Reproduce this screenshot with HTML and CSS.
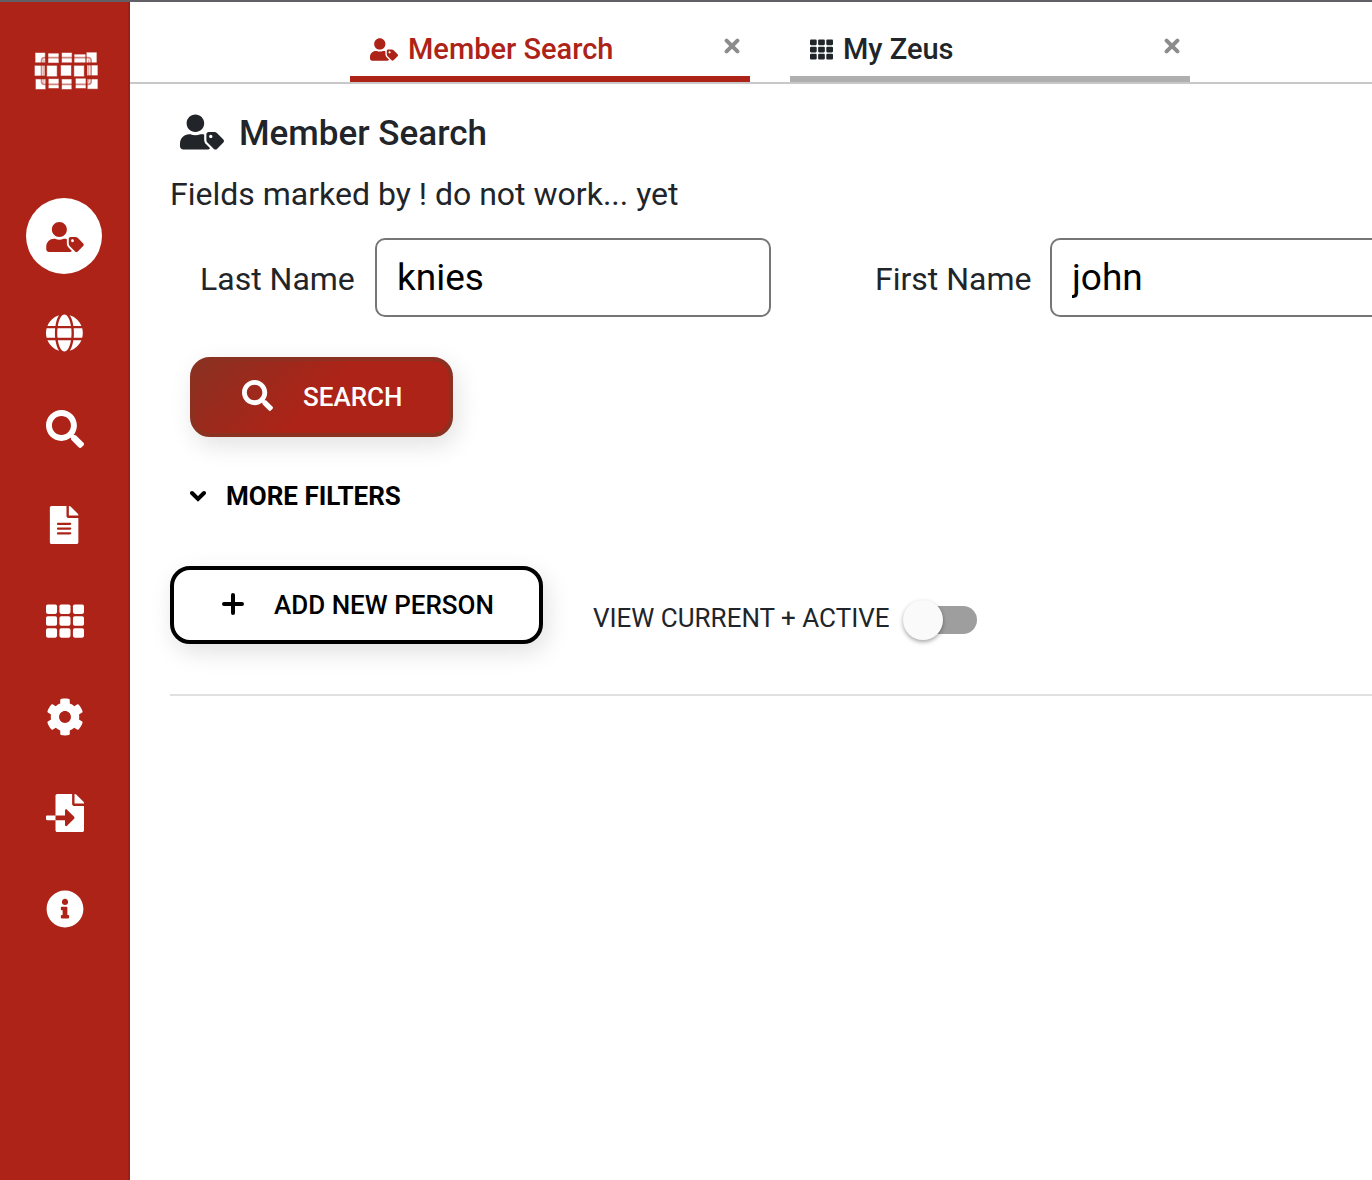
FILE: index.html
```html
<!DOCTYPE html>
<html lang="en">
<head>
<meta charset="utf-8">
<meta name="viewport" content="width=device-width, initial-scale=1">
<title>Member Search</title>
<link rel="stylesheet" href="styles.css">
</head>
<body>
<svg class="sprite" aria-hidden="true">
  <symbol id="user-tag" viewBox="0 0 640 512"><path d="M630.6 364.9l-90.3-90.2c-12-12-28.3-18.7-45.3-18.7h-79.3c-17.7 0-32 14.3-32 32v79.2c0 17 6.7 33.2 18.7 45.2l90.3 90.2c12.5 12.5 32.8 12.5 45.3 0l92.5-92.5c12.6-12.5 12.6-32.7.1-45.2zm-182.8-21c-13.3 0-24-10.7-24-24s10.7-24 24-24 24 10.7 24 24c0 13.2-10.7 24-24 24zm-223.8-88c70.7 0 128-57.3 128-128C352 57.3 294.7 0 224 0S96 57.3 96 128c0 70.6 57.3 127.9 128 127.9zm127.8 111.2V294c-12.2-3.6-24.9-6.2-38.2-6.2h-16.7c-22.2 10.2-46.9 16-72.9 16s-50.6-5.8-72.9-16h-16.7C60.2 287.9 0 348.1 0 422.3v41.6c0 26.5 21.5 48 48 48h352c15.5 0 29.1-7.5 37.9-18.9l-58-58c-18.1-18.1-28.1-42.2-28.1-67.9z"/></symbol>
  <symbol id="search" viewBox="0 0 512 512"><path d="M505 442.7L405.3 343c-4.5-4.5-10.6-7-17-7H372c27.6-35.3 44-79.7 44-128C416 93.1 322.9 0 208 0S0 93.1 0 208s93.1 208 208 208c48.3 0 92.7-16.4 128-44v16.3c0 6.4 2.5 12.5 7 17l99.7 99.7c9.4 9.4 24.6 9.4 33.9 0l28.3-28.3c9.4-9.4 9.4-24.6.1-34zM208 336c-70.7 0-128-57.2-128-128 0-70.7 57.2-128 128-128 70.7 0 128 57.2 128 128 0 70.7-57.2 128-128 128z"/></symbol>
  <symbol id="grid" viewBox="0 0 512 512">
    <rect x="0" y="32" width="149" height="128" rx="24"/><rect x="181" y="32" width="149" height="128" rx="24"/><rect x="363" y="32" width="149" height="128" rx="24"/>
    <rect x="0" y="192" width="149" height="128" rx="24"/><rect x="181" y="192" width="149" height="128" rx="24"/><rect x="363" y="192" width="149" height="128" rx="24"/>
    <rect x="0" y="352" width="149" height="128" rx="24"/><rect x="181" y="352" width="149" height="128" rx="24"/><rect x="363" y="352" width="149" height="128" rx="24"/>
  </symbol>
  <symbol id="times" viewBox="0 0 16 16"><path d="M2.6 2.6l10.8 10.8M13.4 2.6L2.6 13.4" fill="none" stroke="currentColor" stroke-width="4" stroke-linecap="round"/></symbol>
</svg>

<div class="app">
  <aside class="sidebar">
    <a class="logo" href="#" aria-label="Home">
      <svg viewBox="102 155 195 115" width="65" height="38">
        <g fill="#fff" stroke="#fff" stroke-opacity=".45" stroke-width="3">
          <rect x="106" y="158" width="28" height="28"/><rect x="145" y="160" width="30" height="27"/><rect x="186" y="158" width="29" height="28"/><rect x="224" y="163" width="32" height="23"/><rect x="261" y="157" width="29" height="29"/>
          <rect x="104" y="197" width="29" height="29"/><rect x="141" y="197" width="29" height="31"/><rect x="183" y="196" width="30" height="30"/><rect x="223" y="197" width="29" height="31"/><rect x="263" y="196" width="30" height="29"/>
          <rect x="107" y="238" width="28" height="29"/><rect x="146" y="237" width="29" height="27"/><rect x="186" y="238" width="28" height="29"/><rect x="228" y="236" width="29" height="28"/><rect x="264" y="238" width="29" height="28"/>
        </g>
        <g fill="none" stroke="#ad2317">
          <rect x="124" y="172" width="150" height="81" rx="9" stroke-width="5" stroke-opacity=".55"/>
          <path d="M131 178V248M267 178V248" stroke-width="3" stroke-opacity=".5"/>
        </g>
      </svg>
    </a>
    <nav class="menu" aria-label="Main">
      <a class="item current" href="#" aria-label="Member Search"><span class="disc"><svg width="38" height="30"><use href="#user-tag"/></svg></span></a>
      <a class="item" href="#" aria-label="Web"><svg viewBox="0 0 512 512" width="38" height="38"><path d="M336.500 160C322 70.700 287.800 8 248 8s-74 62.700-88.500 152h177zM152 256c0 22.200 1.200 43.500 3.300 64h185.300c2.100-20.500 3.300-41.800 3.300-64s-1.200-43.500-3.300-64H155.300c-2.100 20.500-3.300 41.800-3.300 64zm324.700-96c-28.600-67.900-86.500-120.400-158-141.600 24.400 33.800 41.200 84.700 50 141.600h108zM177.200 18.400C105.800 39.600 47.800 92.100 19.300 160h108c8.700-56.900 25.500-107.800 49.900-141.600zM487.400 192H372.700c2.100 21 3.300 42.500 3.300 64s-1.200 43-3.300 64h114.600c5.500-20.500 8.600-41.800 8.600-64s-3.100-43.500-8.500-64zM120 256c0-21.500 1.200-43 3.300-64H8.600C3.200 212.500 0 233.800 0 256s3.200 43.500 8.600 64h114.600c-2-21-3.200-42.500-3.200-64zm39.500 96c14.500 89.300 48.700 152 88.500 152s74-62.700 88.500-152h-177zm159.300 141.600c71.400-21.200 129.400-73.700 158-141.600h-108c-8.800 56.900-25.600 107.800-50 141.600zM19.300 352c28.600 67.900 86.500 120.400 158 141.600-24.400-33.800-41.200-84.700-50-141.600h-108z"/></svg></a>
      <a class="item" href="#" aria-label="Search"><svg width="38" height="38"><use href="#search"/></svg></a>
      <a class="item" href="#" aria-label="Documents"><svg viewBox="-52 0 512 512" width="38" height="38"><path d="M224 136V0H24C10.700 0 0 10.700 0 24v464c0 13.300 10.700 24 24 24h336c13.300 0 24-10.700 24-24V160H248c-13.200 0-24-10.800-24-24zm64 236c0 6.600-5.400 12-12 12H108c-6.600 0-12-5.400-12-12v-8c0-6.600 5.400-12 12-12h168c6.600 0 12 5.400 12 12v8zm0-64c0 6.600-5.400 12-12 12H108c-6.600 0-12-5.400-12-12v-8c0-6.600 5.400-12 12-12h168c6.600 0 12 5.400 12 12v8zm0-72v8c0 6.600-5.400 12-12 12H108c-6.600 0-12-5.400-12-12v-8c0-6.600 5.400-12 12-12h168c6.600 0 12 5.400 12 12zm96-114.100v6.100H256V0h6.100c6.400 0 12.500 2.500 17 7l97.900 98c4.500 4.500 7 10.600 7 16.900z"/></svg></a>
      <a class="item" href="#" aria-label="My Zeus"><svg width="38" height="38"><use href="#grid"/></svg></a>
      <a class="item" href="#" aria-label="Settings"><svg viewBox="0 0 512 512" width="38" height="38"><path d="M487.400 315.700l-42.600-24.600c4.300-23.200 4.300-47 0-70.200l42.600-24.600c4.900-2.800 7.100-8.600 5.500-14-11.100-35.600-30-67.800-54.700-94.600-3.800-4.100-10-5.100-14.800-2.300L380.800 110c-17.900-15.400-38.500-27.300-60.800-35.100V25.800c0-5.600-3.900-10.500-9.400-11.700-36.700-8.200-74.300-7.800-109.200 0-5.500 1.200-9.400 6.100-9.400 11.700V75c-22.200 7.900-42.800 19.800-60.800 35.100L88.700 85.500c-4.900-2.800-11-1.900-14.800 2.300-24.700 26.700-43.600 58.900-54.700 94.600-1.700 5.400.6 11.200 5.500 14L67.300 221c-4.300 23.200-4.300 47 0 70.200l-42.600 24.600c-4.900 2.800-7.100 8.600-5.500 14 11.100 35.600 30 67.800 54.700 94.600 3.800 4.100 10 5.100 14.800 2.300l42.600-24.600c17.900 15.400 38.500 27.300 60.800 35.100v49.200c0 5.600 3.900 10.500 9.400 11.700 36.700 8.200 74.300 7.800 109.200 0 5.500-1.200 9.400-6.100 9.400-11.700v-49.200c22.200-7.900 42.800-19.800 60.800-35.100l42.600 24.600c4.900 2.800 11 1.900 14.800-2.300 24.700-26.700 43.600-58.900 54.700-94.600 1.500-5.500-.7-11.300-5.600-14.100zM256 336c-44.100 0-80-35.900-80-80s35.900-80 80-80 80 35.900 80 80-35.900 80-80 80z"/></svg></a>
      <a class="item" href="#" aria-label="Import"><svg viewBox="0 0 512 512" width="38" height="38"><path d="M16 288c-8.800 0-16 7.200-16 16v32c0 8.800 7.200 16 16 16h112v-64zm489-183L407.100 7c-4.500-4.500-10.600-7-17-7H384v128h128v-6.100c0-6.300-2.500-12.400-7-16.900zm-153 31V0H152c-13.300 0-24 10.700-24 24v264h128v-65.200c0-14.300 17.300-21.400 27.400-11.300L379 308c6.600 6.700 6.600 17.400 0 24l-95.700 96.400c-10.100 10.100-27.400 3-27.400-11.300V352H128v136c0 13.300 10.700 24 24 24h336c13.300 0 24-10.700 24-24V160H376c-13.200 0-24-10.800-24-24z"/></svg></a>
      <a class="item" href="#" aria-label="Information"><svg viewBox="0 0 512 512" width="38" height="38"><path d="M256 8C119 8 8 119 8 256c0 137 111 248 248 248s248-111 248-248C504 119 393 8 256 8zm0 110c23.200 0 42 18.800 42 42s-18.800 42-42 42-42-18.800-42-42 18.800-42 42-42zm56 254c0 6.600-5.400 12-12 12h-88c-6.600 0-12-5.400-12-12v-24c0-6.600 5.400-12 12-12h12v-64h-12c-6.600 0-12-5.400-12-12v-24c0-6.600 5.400-12 12-12h64c6.600 0 12 5.400 12 12v100h12c6.600 0 12 5.400 12 12v24z"/></svg></a>
    </nav>
  </aside>

  <div class="workspace">
    <header class="tabs">
      <div class="tab active">
        <a class="tab-link" href="#"><svg width="28" height="23"><use href="#user-tag"/></svg>Member Search</a>
        <button class="close" type="button" aria-label="Close Member Search"><svg width="16" height="16"><use href="#times"/></svg></button>
      </div>
      <div class="tab">
        <a class="tab-link" href="#"><svg width="23" height="23"><use href="#grid"/></svg>My Zeus</a>
        <button class="close" type="button" aria-label="Close My Zeus"><svg width="16" height="16"><use href="#times"/></svg></button>
      </div>
    </header>

    <main class="content">
      <h1 class="title"><svg width="44" height="36"><use href="#user-tag"/></svg>Member Search</h1>
      <p class="note">Fields marked by ! do not work... yet</p>
      <form class="form">
        <div class="fields">
          <div class="field"><label for="last-name">Last Name</label><input id="last-name" type="text" value="knies"></div>
          <div class="field"><label for="first-name">First Name</label><input id="first-name" type="text" value="john"></div>
        </div>
        <button class="button primary" type="button"><svg width="31" height="31"><use href="#search"/></svg>SEARCH</button>
        <button class="more" type="button"><svg viewBox="0 0 16 12" width="16" height="12"><path d="M2 3l6 6 6-6" fill="none" stroke="currentColor" stroke-width="4" stroke-linecap="round"/></svg>MORE FILTERS</button>
      </form>
      <div class="actions">
        <button class="button outline" type="button"><svg viewBox="0 0 22 22" width="22" height="22"><path d="M2 11H20M11 2V20" fill="none" stroke="currentColor" stroke-width="4" stroke-linecap="round"/></svg>ADD NEW PERSON</button>
        <label class="toggle" for="view-active">VIEW CURRENT + ACTIVE<input id="view-active" class="switch" type="checkbox" role="switch"></label>
      </div>
      <hr class="rule">
    </main>
  </div>
</div>
</body>
</html>
```
FILE: styles.css
```css
:root {
  --red: #ad2317;
  --red-dark: #8a3122;
  --ink: #212529;
}

* { box-sizing: border-box; }

body {
  margin: 0;
  font-family: Roboto, sans-serif;
  font-size: 32px;
  line-height: 48px;
  color: var(--ink);
  background: #fff;
}

svg { display: block; flex: none; fill: currentColor; }
a { color: inherit; text-decoration: none; }
button { font-family: inherit; cursor: pointer; }

.sprite { position: absolute; width: 0; height: 0; }

.app {
  display: flex;
  min-height: 100vh;
  border-top: 2px solid #625f66;
}

/* Sidebar */
.sidebar {
  flex: none;
  width: 130px;
  padding-top: 50px;
  color: #fff;
  background: var(--red);
  border-right: 2px solid #9c1f14;
}

.logo {
  display: flex;
  justify-content: center;
  padding-left: 4px;
}

.menu { margin-top: 99px; }

.item {
  display: flex;
  align-items: center;
  justify-content: center;
  height: 96px;
  padding-left: 2px;
}

.item.current { padding: 0 0 2px; }

.disc {
  display: flex;
  align-items: center;
  justify-content: center;
  width: 76px;
  height: 76px;
  padding: 2px 0 0 2px;
  border-radius: 50%;
  color: var(--red);
  background: #fff;
}

/* Tabs */
.workspace {
  flex: 1;
  min-width: 0;
  overflow: hidden;
}

.tabs {
  display: flex;
  gap: 40px;
  height: 82px;
  padding-left: 220px;
  border-bottom: 2px solid #c8c8c8;
}

.tab {
  display: flex;
  align-items: center;
  justify-content: space-between;
  flex: 0 0 400px;
  padding: 20px 10px 0 20px;
  border-bottom: 6px solid #afafaf;
}

.tab.active { color: var(--red); border-color: var(--red); }

.tab-link {
  display: flex;
  align-items: center;
  gap: 10px;
  font-size: 29px;
  font-weight: 500;
}

.close {
  padding: 0 0 6px;
  border: 0;
  color: #8c8c8c;
  background: none;
}

/* Content */
.content { padding: 20px 0 0 40px; }

.title {
  display: flex;
  align-items: center;
  gap: 15px;
  margin: 0;
  padding: 8px 10px 4px;
  font-size: 35px;
  font-weight: 500;
  line-height: 44px;
}

.title svg { margin-bottom: 4px; }

.note { margin: 10px 0 20px; }

.fields { display: flex; }

.field {
  display: flex;
  align-items: center;
  justify-content: space-between;
  flex: 0 0 675px;
  padding: 0 74px 0 30px;
}

.field label { padding-top: 2px; }

.field input {
  width: 396px;
  height: 79px;
  padding: 0 20px;
  border: 2px solid #767676;
  border-radius: 10px;
  font-family: inherit;
  font-size: 37px;
  color: #000;
  background: #fff;
}

.button {
  display: flex;
  align-items: center;
  gap: 30px;
  padding: 0 47px 0 48px;
  border: 4px solid;
  border-radius: 20px;
  font-size: 26px;
  font-weight: 500;
  box-shadow: 4px 8px 24px rgba(0, 0, 0, .12);
}

.button svg { margin-bottom: 4px; }

.primary {
  height: 80px;
  margin: 40px 0 0 20px;
  color: #fff;
  border-color: var(--red-dark);
  background: linear-gradient(135deg, var(--red-dark), var(--red) 50%);
}

.more {
  display: flex;
  align-items: center;
  gap: 20px;
  margin: 35px 0 0 20px;
  padding: 0;
  border: 0;
  font-size: 26px;
  font-weight: 700;
  line-height: 48px;
  color: #000;
  background: none;
}

.actions {
  display: flex;
  align-items: center;
  gap: 50px;
  margin-top: 46px;
}

.outline {
  height: 78px;
  padding-right: 45px;
  color: #000;
  border-color: #000;
  background: #fff;
}

.outline svg { margin-bottom: 2px; }

.toggle {
  display: flex;
  align-items: center;
  gap: 15px;
  padding-top: 26px;
  font-size: 26px;
}

.switch {
  position: relative;
  width: 72px;
  height: 28px;
  margin: 4px 0 0;
  border-radius: 14px;
  appearance: none;
  background: #9e9e9e;
}

.switch::before {
  content: "";
  position: absolute;
  top: -6px;
  left: -2px;
  width: 40px;
  height: 40px;
  border-radius: 50%;
  background: #fafafa;
  box-shadow: 0 2px 4px rgba(0, 0, 0, .35);
}

.switch:checked::before { left: 34px; }

.rule {
  height: 2px;
  margin: 50px 0 0;
  border: 0;
  background: #e0e0e0;
}
```
